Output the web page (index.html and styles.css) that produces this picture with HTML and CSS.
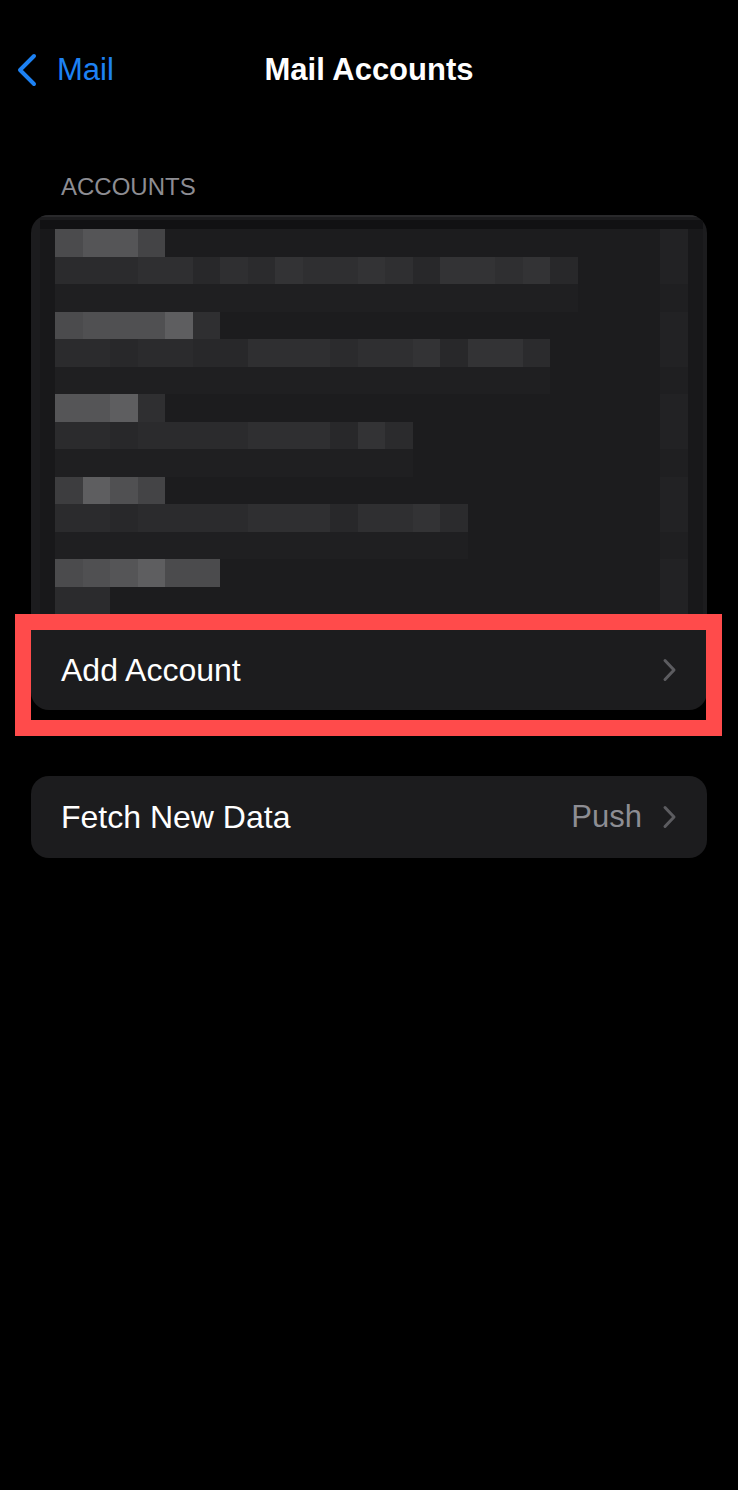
FILE: index.html
```html
<!DOCTYPE html>
<html lang="en">
<head>
  <meta charset="UTF-8" />
  <meta name="viewport" content="width=device-width, initial-scale=1.0"/>
  <title>Mail Accounts</title>
  <link rel="stylesheet" href="styles.css">
</head>
<body>

  <!-- Navigation bar -->
  <header class="nav">
    <a class="back">
      <svg class="back-icon" viewBox="0 0 22 34" width="22" height="34">
        <path d="M18 3 L4 17 L18 31" fill="none" stroke="currentColor" stroke-width="4" stroke-linecap="round" stroke-linejoin="round"/>
      </svg>
      <span>Mail</span>
    </a>
    <h1 class="title">Mail Accounts</h1>
    <span></span>
  </header>

  <main class="content">
    <!-- Accounts group -->
    <section class="group">
      <h2 class="group-label">ACCOUNTS</h2>
      <div class="card-wrap">
        <div class="card">
          <div class="blurred">
            <div class="pix-area">
              <div class="pix-grid" id="pix-grid"></div>
            </div>
          </div>
          <div class="row add-row">
            <span class="row-label">Add Account</span>
            <svg class="chev" viewBox="0 0 15 24" width="15" height="24">
              <path d="M3 2.5 L12 12 L3 21.5" fill="none" stroke="currentColor" stroke-width="3" stroke-linecap="round" stroke-linejoin="round"/>
            </svg>
          </div>
        </div>
        <div class="highlight"></div>
      </div>
    </section>

    <!-- Fetch group -->
    <section class="group fetch-group">
      <div class="card">
        <div class="row">
          <span class="row-label">Fetch New Data</span>
          <span class="row-value">Push</span>
          <svg class="chev" viewBox="0 0 15 24" width="15" height="24">
            <path d="M3 2.5 L12 12 L3 21.5" fill="none" stroke="currentColor" stroke-width="3" stroke-linecap="round" stroke-linejoin="round"/>
          </svg>
        </div>
      </div>
    </section>
  </main>

  <script>
    // pixelated account list (hidden addresses)
    const shades = {
      a: '#1f1f21', b: '#222224', c: '#28282a', d: '#2b2b2d', e: '#2f2f31',
      f: '#333335', g: '#3d3d3f', h: '#444446', i: '#4b4b4d', j: '#505052',
      k: '#555557', l: '#5e5e60'
    };
    const rows = [
      ['ikkh', 'b'],
      ['dddeecedfeefecffefc', 'b'],
      ['aaaaaaaaaaaaaaaaaaa', 'a'],
      ['ijjjle', 'b'],
      ['ddcddcceeedeefcffd', 'b'],
      ['aaaaaaaaaaaaaaaaaa', 'a'],
      ['kkle', 'b'],
      ['ddcddddeeecfd', 'b'],
      ['aaaaaaaaaaaaa', 'a'],
      ['gljh', 'b'],
      ['ddcddddeeeceefd', 'b'],
      ['aaaaaaaaaaaaaaa', 'a'],
      ['ijklii', 'b'],
      ['dd', 'b']
    ];
    const grid = document.getElementById('pix-grid');
    rows.forEach(([body, edge]) => {
      (body.padEnd(22, '.') + edge).split('').forEach(ch => {
        const cell = document.createElement('div');
        cell.className = 'pix';
        if (shades[ch]) cell.style.background = shades[ch];
        grid.appendChild(cell);
      });
    });
  </script>

</body>
</html>
```

FILE: styles.css
```css
* {
  margin: 0;
  padding: 0;
  box-sizing: border-box;
  font-family: "Liberation Sans", Arial, sans-serif;
}
body {
  background-color: #000;
  color: #fff;
  width: 738px;
  min-height: 1490px;
}
.nav {
  height: 140px;
  display: grid;
  grid-template-columns: 1fr auto 1fr;
  align-items: center;
}
.back {
  display: flex;
  align-items: center;
  gap: 19px;
  padding-left: 16px;
  color: #1d82f4;
  font-size: 31px;
  text-decoration: none;
}
.back-icon {
  display: block;
}
.title {
  font-size: 31px;
  font-weight: 700;
}
.content {
  padding: 0 31px;
}
.group-label {
  font-size: 24px;
  font-weight: 400;
  line-height: 28px;
  color: #8d8d93;
  padding-left: 30px;
  margin-top: 33px;
  margin-bottom: 14px;
}
.card-wrap {
  position: relative;
}
.card {
  background-color: #1c1c1e;
  border-radius: 18px;
  overflow: hidden;
}
.blurred {
  padding: 5px 4px 0 9px;
  box-shadow: inset 0 2px 0 #29292b;
}
.pix-area {
  background-color: #18181a;
  border-top: 9px solid #111113;
  padding: 0 15.5px 0 15px;
}
.pix-grid {
  display: grid;
  grid-template-columns: repeat(23, 27.5px);
  grid-auto-rows: 27.5px;
  background-color: #1c1c1e;
}
.row {
  display: flex;
  align-items: center;
  height: 82px;
  padding: 0 30px 0 30px;
  font-size: 32px;
}
.add-row {
  height: 96px;
  padding-top: 16px;
}
.row-label {
  flex: 1;
}
.row-value {
  color: #8d8d93;
  margin-right: 20px;
  font-size: 31px;
}
.chev {
  display: block;
  color: #5c5c60;
}
.highlight {
  position: absolute;
  left: -16px;
  right: -15px;
  top: 399px;
  height: 122px;
  border: 16px solid #ff4b4b;
}
.fetch-group {
  margin-top: 66px;
}
```
